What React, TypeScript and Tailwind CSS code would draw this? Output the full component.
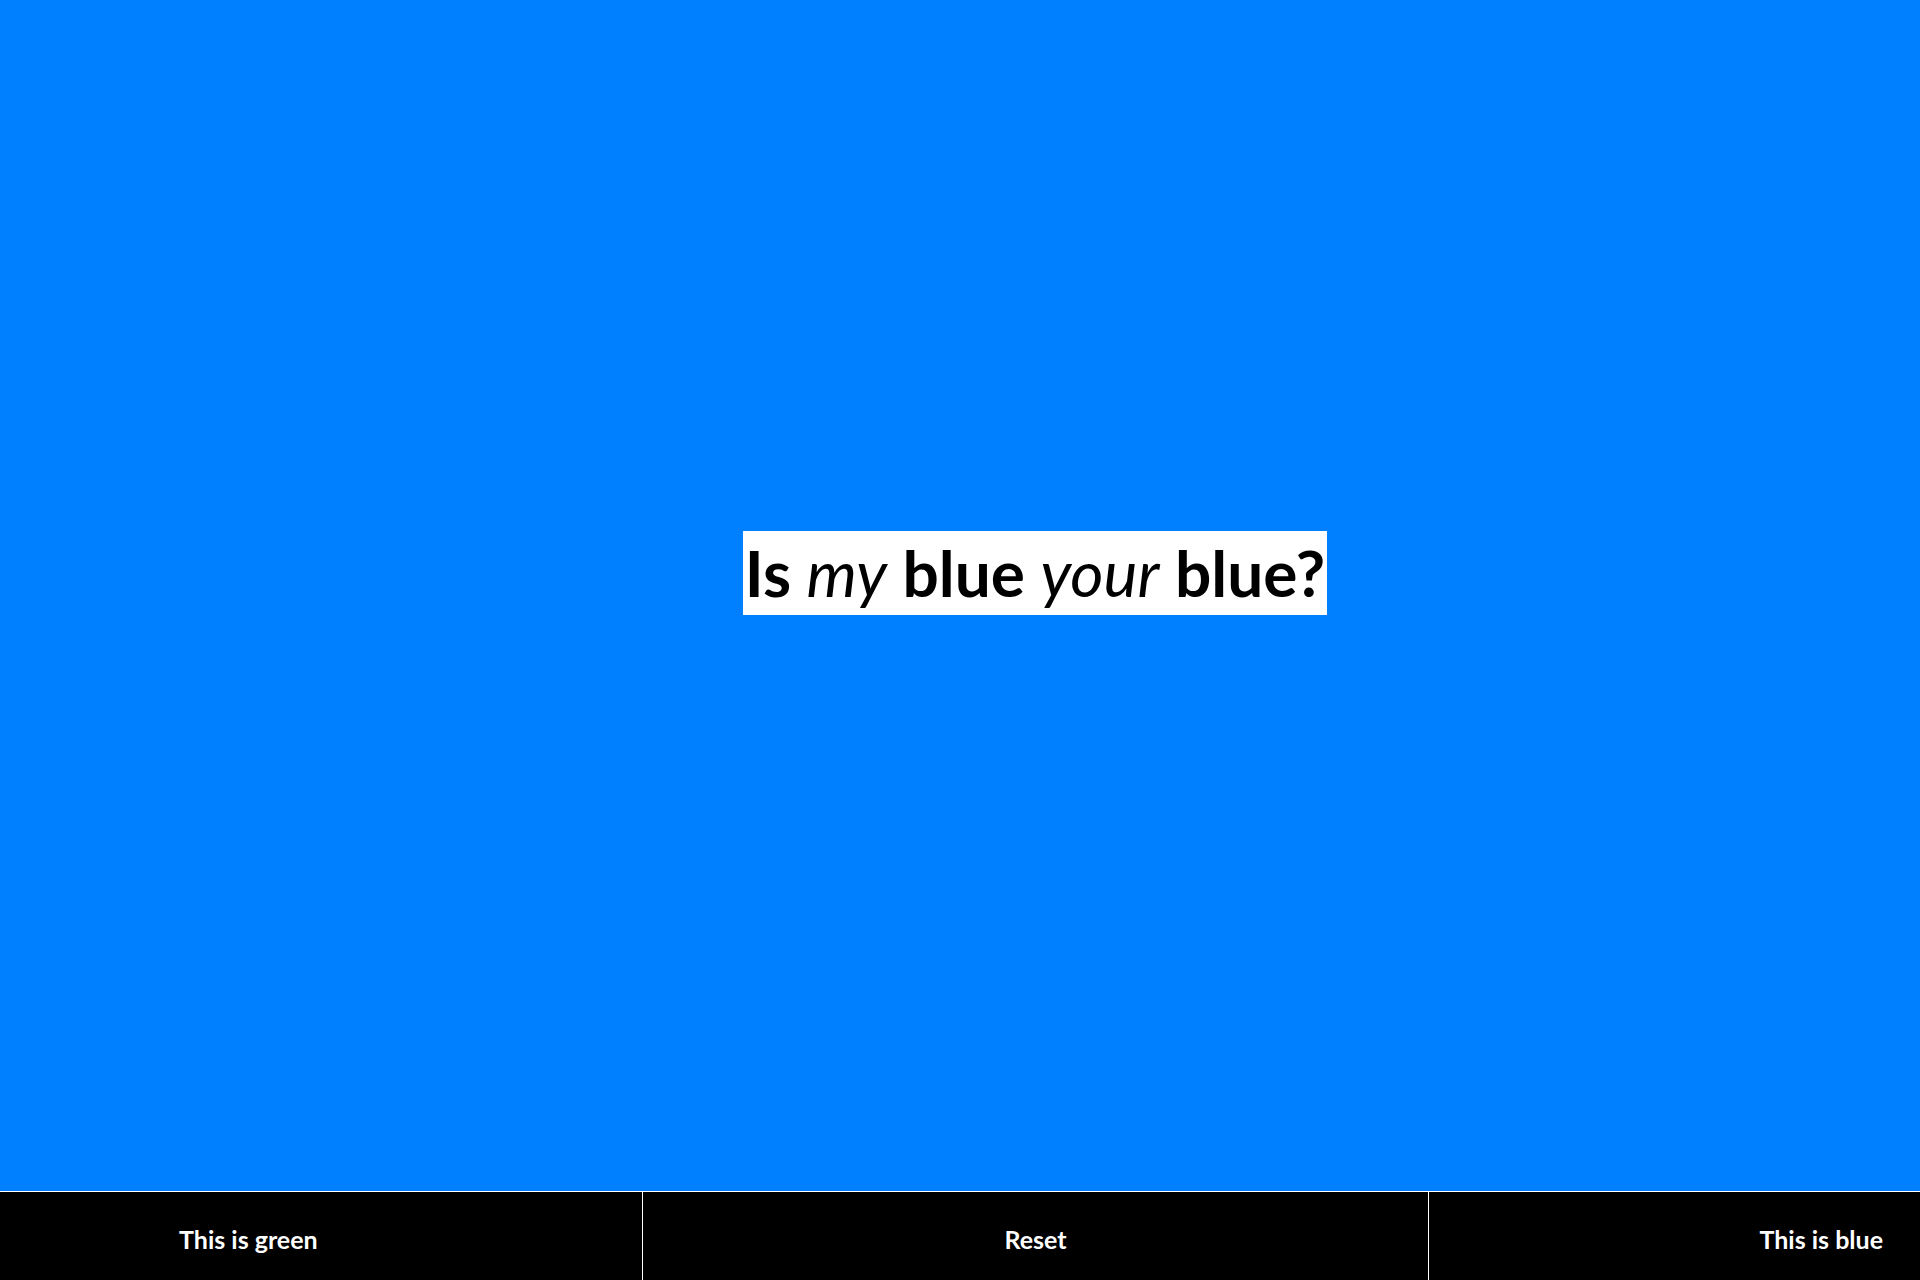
import React from "react";

export default function App() {
  return (
    <div className="flex h-[1280px] w-[1920px] flex-col overflow-hidden bg-[#0080ff]" style={{ fontFamily: "Lato, 'Open Sans', sans-serif" }}>
      <main className="flex flex-1 items-start justify-center pl-[150px] pt-[531px]">
        <h1 className="bg-white px-[2px] text-[64px] leading-[84px] font-bold text-black">
          Is <em className="font-normal italic">my</em> blue <em className="font-normal italic">your</em> blue?
        </h1>
      </main>
      <nav className="flex h-[89px] border-t border-white bg-black text-[25px] font-bold text-white">
        <button className="flex w-[642px] items-center justify-start pl-[179px] pt-[8px]">This is green</button>
        <button className="flex w-[786px] items-center justify-center border-l border-white pt-[8px]">Reset</button>
        <button className="flex flex-1 items-center justify-end border-l border-white pr-[37px] pt-[8px]">This is blue</button>
      </nav>
    </div>
  );
}
